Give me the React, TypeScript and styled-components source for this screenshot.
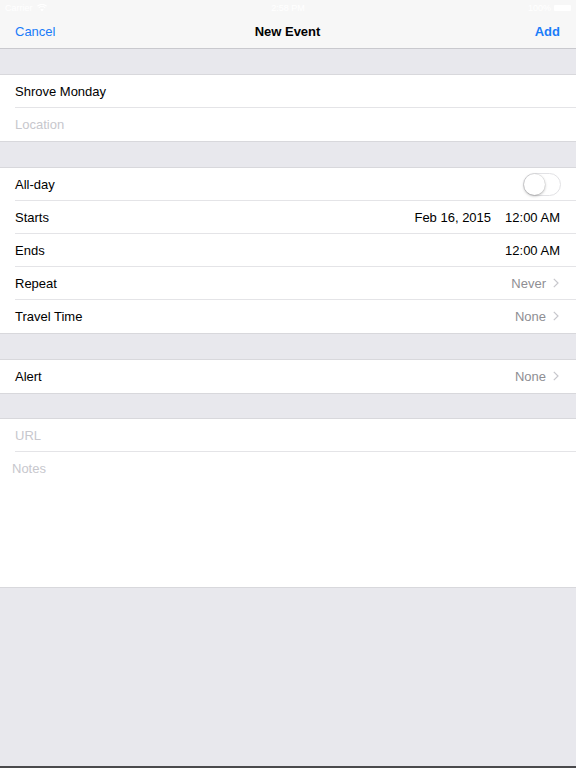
import React from 'react';
import styled, { createGlobalStyle } from 'styled-components';

const GlobalStyle = createGlobalStyle`
  html, body {
    margin: 0;
    padding: 0;
    background: #e8e8ed;
  }
  body {
    font-family: "Liberation Sans", Arial, sans-serif;
    -webkit-font-smoothing: antialiased;
  }
`;

const Screen = styled.div`
  width: 576px;
  height: 768px;
  display: flex;
  flex-direction: column;
  background: #e8e8ed;
  overflow: hidden;
`;

const Header = styled.header`
  background: #f7f7f7;
  border-bottom: 1px solid #c9c9ce;
  display: flex;
  flex-direction: column;
`;

const StatusBar = styled.div`
  height: 15px;
  display: grid;
  grid-template-columns: 1fr auto 1fr;
  align-items: center;
  padding: 0 5px;
  font-size: 9px;
  color: #ffffff;
`;

const StatusLeft = styled.div`
  display: flex;
  align-items: center;
  gap: 4px;
`;

const StatusRight = styled.div`
  display: flex;
  align-items: center;
  justify-content: flex-end;
  gap: 3px;
`;

const Battery = styled.div`
  width: 17px;
  height: 6px;
  background: #ffffff;
  border-radius: 1px;
`;

const NavBar = styled.div`
  height: 33px;
  display: grid;
  grid-template-columns: 1fr auto 1fr;
  align-items: center;
  padding: 0 16px 0 15px;
  font-size: 13px;
`;

const NavButton = styled.span<{ $align?: 'left' | 'right'; $bold?: boolean }>`
  color: #1a7cf9;
  text-align: ${(p) => p.$align ?? 'left'};
  font-weight: ${(p) => (p.$bold ? 700 : 400)};
`;

const NavTitle = styled.span`
  color: #000;
  font-weight: 700;
`;

const Gap = styled.div<{ $short?: boolean }>`
  height: ${(p) => (p.$short ? '24px' : '25px')};
`;

const Group = styled.section`
  background: #ffffff;
  border-top: 1px solid #d8d8dc;
  border-bottom: 1px solid #d8d8dc;
`;

const Row = styled.div<{ $last?: boolean }>`
  height: 33px;
  margin-left: 15px;
  padding-right: 16px;
  display: flex;
  align-items: center;
  font-size: 13px;
  color: #000;
  border-bottom: ${(p) => (p.$last ? 'none' : '1px solid #e4e4e7')};
  box-sizing: border-box;
  padding-bottom: ${(p) => (p.$last ? '1px' : '0')};
`;

const Label = styled.span<{ $placeholder?: boolean }>`
  flex: 1;
  color: ${(p) => (p.$placeholder ? '#c7c7cd' : '#000')};
`;

const Value = styled.span<{ $muted?: boolean }>`
  color: ${(p) => (p.$muted ? '#8e8e93' : '#000')};
`;

const DateValues = styled.div`
  display: flex;
  gap: 14px;
`;

const Chevron = styled.svg`
  width: 6px;
  height: 10px;
  margin-left: 7px;
  margin-right: 1px;
`;

const Switch = styled.div`
  width: 38px;
  height: 23px;
  border-radius: 12px;
  border: 1px solid #e2e2e5;
  box-sizing: border-box;
  background: #fff;
  position: relative;
  margin-right: -1px;
`;

const Knob = styled.div`
  position: absolute;
  left: 0;
  top: 0;
  width: 21px;
  height: 21px;
  border-radius: 50%;
  background: #fff;
  box-shadow: 0 1px 3px rgba(0, 0, 0, 0.3), 0 0 0 0.5px rgba(0, 0, 0, 0.08);
`;

const NotesArea = styled.div`
  height: 135px;
  padding: 9px 12px;
  box-sizing: border-box;
  font-size: 13px;
  color: #c7c7cd;
`;

const Fill = styled.div`
  flex: 1;
`;

const BottomEdge = styled.div`
  height: 2px;
  background: #4a4a4c;
`;

const ChevronIcon = () => (
  <Chevron viewBox="0 0 6 10">
    <path d="M0.8 0.8 L5 5 L0.8 9.2" fill="none" stroke="#c7c7cc" strokeWidth="1.2" />
  </Chevron>
);

const WifiIcon = () => (
  <svg width="10" height="8" viewBox="0 0 10 8">
    <path d="M5 7.5 L3.3 5.5 A2.6 2.6 0 0 1 6.7 5.5 Z" fill="#fff" />
    <path d="M1.8 3.8 A4.6 4.6 0 0 1 8.2 3.8" fill="none" stroke="#fff" strokeWidth="1.1" />
    <path d="M0.4 2.2 A6.8 6.8 0 0 1 9.6 2.2" fill="none" stroke="#fff" strokeWidth="1.1" />
  </svg>
);

const App: React.FC = () => (
  <>
    <GlobalStyle />
    <Screen>
      <Header>
        <StatusBar>
          <StatusLeft>
            <span>Carrier</span>
            <WifiIcon />
          </StatusLeft>
          <span>2:58 PM</span>
          <StatusRight>
            <span>100%</span>
            <Battery />
          </StatusRight>
        </StatusBar>
        <NavBar>
          <NavButton>Cancel</NavButton>
          <NavTitle>New Event</NavTitle>
          <NavButton $align="right" $bold>
            Add
          </NavButton>
        </NavBar>
      </Header>

      <Gap />
      <Group>
        <Row>
          <Label>Shrove Monday</Label>
        </Row>
        <Row $last>
          <Label $placeholder>Location</Label>
        </Row>
      </Group>

      <Gap />
      <Group>
        <Row>
          <Label>All-day</Label>
          <Switch>
            <Knob />
          </Switch>
        </Row>
        <Row>
          <Label>Starts</Label>
          <DateValues>
            <Value>Feb 16, 2015</Value>
            <Value>12:00 AM</Value>
          </DateValues>
        </Row>
        <Row>
          <Label>Ends</Label>
          <Value>12:00 AM</Value>
        </Row>
        <Row>
          <Label>Repeat</Label>
          <Value $muted>Never</Value>
          <ChevronIcon />
        </Row>
        <Row $last>
          <Label>Travel Time</Label>
          <Value $muted>None</Value>
          <ChevronIcon />
        </Row>
      </Group>

      <Gap />
      <Group>
        <Row $last>
          <Label>Alert</Label>
          <Value $muted>None</Value>
          <ChevronIcon />
        </Row>
      </Group>

      <Gap $short />
      <Group>
        <Row>
          <Label $placeholder>URL</Label>
        </Row>
        <NotesArea>Notes</NotesArea>
      </Group>

      <Fill />
      <BottomEdge />
    </Screen>
  </>
);

export default App;
